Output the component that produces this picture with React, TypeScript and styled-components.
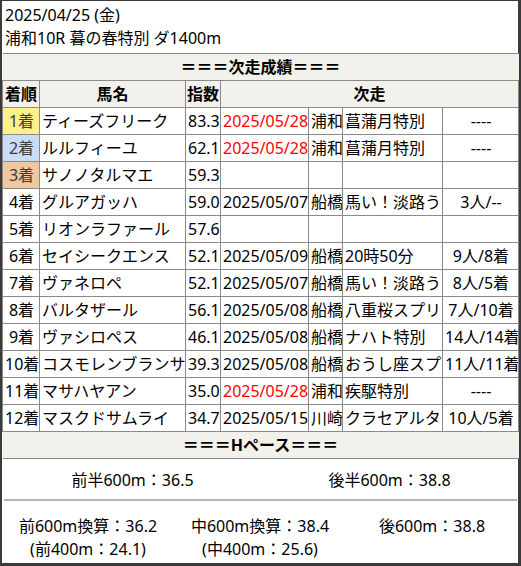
import React from "react";
import styled, { createGlobalStyle } from "styled-components";

const Global = createGlobalStyle`
  html, body { margin: 0; padding: 0; background: #fff; }
  body {
    font-family: "Noto Sans", "Noto Sans CJK JP", sans-serif;
    font-size: 16px;
    color: #000;
  }
`;

const Frame = styled.div`
  width: 516px;
  border-style: solid;
  border-color: #3a3a3a;
  border-width: 1px 3px 3px 2px;
  background: #fff;
`;

const Title = styled.div`
  padding: 3px 2px 0 3px;
  height: 49px;
  line-height: 23px;
`;

const Table = styled.table`
  width: 516px;
  table-layout: fixed;
  border-collapse: collapse;
`;

const Cell = styled.td<{ $align?: string; $bg?: string; $red?: boolean; $dim?: boolean }>`
  border: 1px solid #8a8a8a;
  height: 26px;
  padding: 0 1px 0 2px;
  line-height: 26px;
  white-space: nowrap;
  overflow: hidden;
  text-align: ${(p) => p.$align || "left"};
  background: ${(p) => p.$bg || "transparent"};
  color: ${(p) => (p.$red ? "#ff0000" : p.$dim ? "#3c3c3c" : "#000")};
`;

const HeadCell = styled.th`
  border: 1px solid #8a8a8a;
  height: 26px;
  padding: 0 1px;
  line-height: 26px;
  font-weight: bold;
  background: #f2f1ec;
  text-align: center;
  white-space: nowrap;
`;

const SectionCell = styled.th`
  border: 1px solid #8a8a8a;
  border-left: none;
  border-right: none;
  height: 26px;
  padding: 0;
  line-height: 26px;
  font-weight: bold;
  background: #f2f1ec;
  text-align: center;
`;

const PaceTop = styled.div`
  display: grid;
  grid-template-columns: 1fr 1fr;
  height: 40px;
  align-items: center;
  text-align: center;
  padding-left: 2px;
`;

const Divider = styled.div`
  margin: 0 1px 0 2px;
  border-top: 2px solid #b5b5b5;
`;

const PaceBottom = styled.div`
  display: grid;
  grid-template-columns: 1fr 1fr 1fr;
  padding: 14px 0 2px 0;
  line-height: 23px;
  text-align: center;
`;

const PaceCol = styled.div`
  display: flex;
  flex-direction: column;
`;

type Row = {
  rank: string;
  bg?: string;
  name: string;
  idx: string;
  date?: string;
  red?: boolean;
  place?: string;
  race?: string;
  result?: string;
};

const rows: Row[] = [
  { rank: "1着", bg: "#fff08a", name: "ティーズフリーク", idx: "83.3", date: "2025/05/28", red: true, place: "浦和", race: "菖蒲月特別", result: "----" },
  { rank: "2着", bg: "#cadcf8", name: "ルルフィーユ", idx: "62.1", date: "2025/05/28", red: true, place: "浦和", race: "菖蒲月特別", result: "----" },
  { rank: "3着", bg: "#efc8a2", name: "サノノタルマエ", idx: "59.3" },
  { rank: "4着", name: "グルアガッハ", idx: "59.0", date: "2025/05/07", place: "船橋", race: "馬い！淡路う", result: "3人/--" },
  { rank: "5着", name: "リオンラファール", idx: "57.6" },
  { rank: "6着", name: "セイシークエンス", idx: "52.1", date: "2025/05/09", place: "船橋", race: "20時50分", result: "9人/8着" },
  { rank: "7着", name: "ヴァネロペ", idx: "52.1", date: "2025/05/07", place: "船橋", race: "馬い！淡路う", result: "8人/5着" },
  { rank: "8着", name: "バルタザール", idx: "56.1", date: "2025/05/08", place: "船橋", race: "八重桜スプリ", result: "7人/10着" },
  { rank: "9着", name: "ヴァシロペス", idx: "46.1", date: "2025/05/08", place: "船橋", race: "ナハト特別", result: "14人/14着" },
  { rank: "10着", name: "コスモレンブランサ", idx: "39.3", date: "2025/05/08", place: "船橋", race: "おうし座スプ", result: "11人/11着" },
  { rank: "11着", name: "マサハヤアン", idx: "35.0", date: "2025/05/28", red: true, place: "浦和", race: "疾駆特別", result: "----" },
  { rank: "12着", name: "マスクドサムライ", idx: "34.7", date: "2025/05/15", place: "川崎", race: "クラセアルタ", result: "10人/5着" },
];

export default function App() {
  return (
    <>
      <Global />
      <Frame>
        <Title>
          <div>2025/04/25 (金)</div>
          <div>浦和10R 暮の春特別 ダ1400m</div>
        </Title>
        <Table>
          <colgroup>
            <col style={{ width: 37 }} />
            <col style={{ width: 146 }} />
            <col style={{ width: 35 }} />
            <col style={{ width: 88 }} />
            <col style={{ width: 34 }} />
            <col style={{ width: 100 }} />
            <col style={{ width: 76 }} />
          </colgroup>
          <thead>
            <tr>
              <SectionCell colSpan={7}>＝＝＝次走成績＝＝＝</SectionCell>
            </tr>
            <tr>
              <HeadCell>着順</HeadCell>
              <HeadCell>馬名</HeadCell>
              <HeadCell>指数</HeadCell>
              <HeadCell colSpan={4}>次走</HeadCell>
            </tr>
          </thead>
          <tbody>
            {rows.map((r) => (
              <tr key={r.rank}>
                <Cell $align="center" $bg={r.bg} $dim={!!r.bg}>{r.rank}</Cell>
                <Cell>{r.name}</Cell>
                <Cell>{r.idx}</Cell>
                <Cell $red={r.red}>{r.date ?? ""}</Cell>
                <Cell>{r.place ?? ""}</Cell>
                <Cell>{r.race ?? ""}</Cell>
                <Cell $align="center">{r.result ?? ""}</Cell>
              </tr>
            ))}
            <tr>
              <SectionCell colSpan={7}>＝＝＝Hペース＝＝＝</SectionCell>
            </tr>
          </tbody>
        </Table>
        <PaceTop>
          <div>前半600m：36.5</div>
          <div>後半600m：38.8</div>
        </PaceTop>
        <Divider />
        <PaceBottom>
          <PaceCol>
            <div>前600m換算：36.2</div>
            <div>(前400m：24.1)</div>
          </PaceCol>
          <PaceCol>
            <div>中600m換算：38.4</div>
            <div>(中400m：25.6)</div>
          </PaceCol>
          <PaceCol>
            <div>後600m：38.8</div>
          </PaceCol>
        </PaceBottom>
      </Frame>
    </>
  );
}
